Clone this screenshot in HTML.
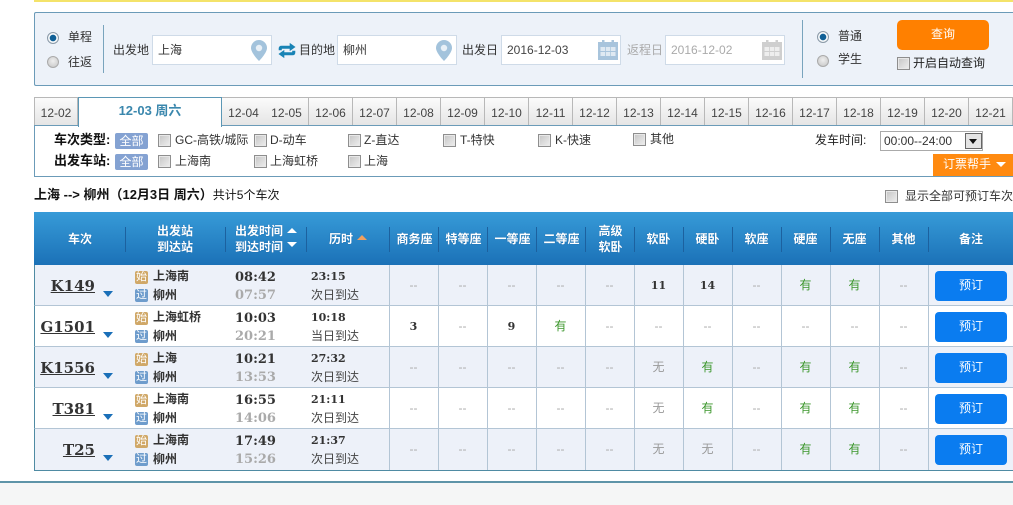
<!DOCTYPE html>
<html lang="zh"><head><meta charset="utf-8"><title>车票查询</title>
<style>
html,body{margin:0;padding:0;background:#fff}
#p{position:relative;width:1013px;height:505px;overflow:hidden;font:12px/16px "Liberation Sans","Noto Sans CJK SC",sans-serif;color:#333;background:#fff}
#p div,#p span,#p b,#p svg{position:absolute;white-space:nowrap}
.rd{width:12px;height:12px;border-radius:50%;border:1px solid #aaa;box-sizing:border-box;background:radial-gradient(circle at 50% 40%,#eee,#c4c4c4)}
.rd.on{border-color:#8a9aa8;background:radial-gradient(circle,#0f5f96 0 3px,#fff 3.6px,#d8dde2)}
.cb{width:13px;height:13px;box-sizing:border-box;border:1px solid #8e8e8e;background:linear-gradient(135deg,#c4c4c4,#efefef);box-shadow:inset 0 0 0 1px #e8e8e8}
.in{height:30px;box-sizing:border-box;width:120px;top:35px;background:#fff;border:1px solid #cfdbe8;line-height:28px;padding-left:5px}
.tab{top:97px;height:29px;width:44px;box-sizing:border-box;border:1px solid #b8b8b8;border-left:0;border-bottom:0;background:linear-gradient(#fbfbfb,#e4e4e4);text-align:center;line-height:30px;color:#444}
.bd{width:33px;height:16px;background:#84a2d2;color:#fff;text-align:center;border-radius:2px;line-height:16px}
.f{font-weight:bold;color:#111;font-size:13px}
.h{color:#fff;font-weight:bold;text-align:center;line-height:16px;text-shadow:0 0 1px #145c9a}
.sp{top:227px;height:25px;width:1px;background:#1c619f}
.row{left:0;width:1013px;height:41px}
.row:before{content:"";position:absolute;left:34px;right:0;top:0;bottom:0;border-left:1px solid #4f8ba3;border-bottom:1px solid #b3c5d5;background:#fff}
.row.o:before{background:#edf1f9}
.v{top:0;width:1px;height:41px;background:#b3c5d5}
.n{right:918px;top:11px;font:bold 15px/20px "DejaVu Serif",serif;color:#333;text-decoration:underline}
.ar{left:103px;top:26px;width:0;height:0;border:5px solid transparent;border-top:6px solid #1a6fb8;border-bottom:0}
.ic{left:135px;width:13px;height:13px;border-radius:2px;color:#fff;font-size:11px;line-height:13px;text-align:center}
.sh{background:#d0a868;top:6px}.gu{background:#6e9ccc;top:24px}
.s1,.s2{left:153px;font-weight:bold;color:#333}.s1{top:3px}.s2{top:22px}
.t1,.t2{left:235px;font:bold 13px/16px "DejaVu Serif",serif}.t1{top:5px;color:#333}.t2{top:23px;color:#aaa}
.d1{left:311px;top:4px;font:bold 11px/16px "DejaVu Serif",serif;color:#333}.d2{left:311px;top:22px;color:#444}
.c{top:0;width:49px;height:41px;line-height:41px;text-align:center;color:#aaa}
.g{color:#3b962b}.m{color:#999}.k{color:#333;font:bold 11px/41px "DejaVu Serif",serif}
.btn{left:935px;top:6px;width:72px;height:30px;border-radius:4px;background:#0a7cf0;color:#fff;text-align:center;line-height:29px}
</style></head><body><div id="p">

<div style="left:34px;right:0;top:0;height:2px;background:#f4e36a"></div>

<div style="left:34px;top:12px;width:979px;height:74px;box-sizing:border-box;background:#edf2f9;border:1px solid #6b9bb8;border-right:0;border-radius:2px 0 0 2px"></div>
<div class="rd on" style="left:47px;top:32px"></div><div style="left:68px;top:29px">单程</div>
<div class="rd" style="left:47px;top:56px"></div><div style="left:68px;top:54px">往返</div>
<div style="left:103px;top:25px;width:1px;height:48px;background:#79a4bd"></div>
<div style="left:113px;top:42px">出发地</div>
<div class="in" style="left:152px">上海</div>
<svg style="left:251px;top:40px" width="16" height="21" viewBox="0 0 16 21"><path d="M8 0a8 8 0 0 0-8 8c0 5 8 13 8 13s8-8 8-13a8 8 0 0 0-8-8z" fill="#a3c3dc"/><circle cx="8" cy="8" r="3.2" fill="#e8f0f7"/></svg>
<svg style="left:278px;top:42px" width="18" height="17" viewBox="0 0 18 17"><path d="M1 8V6.500C1 5 2 4 3.500 4H12V1.500L17 5l-5 3.500V6.500H3.500V8zM17 9v1.500c0 1.500-1 2.500-2.500 2.500H6v2.500L1 12l5-3.500v2h8.500V9z" fill="#1883b5" stroke="#1883b5" stroke-width=".6"/></svg>
<div style="left:299px;top:42px">目的地</div>
<div class="in" style="left:337px">柳州</div>
<svg style="left:436px;top:40px" width="16" height="21" viewBox="0 0 16 21"><path d="M8 0a8 8 0 0 0-8 8c0 5 8 13 8 13s8-8 8-13a8 8 0 0 0-8-8z" fill="#a3c3dc"/><circle cx="8" cy="8" r="3.2" fill="#e8f0f7"/></svg>
<div style="left:462px;top:42px">出发日</div>
<div class="in" style="left:501px;color:#444">2016-12-03</div>
<svg style="left:598px;top:40px" width="20" height="20" viewBox="0 0 20 20"><rect x="0" y="2" width="20" height="18" fill="#a8c4dc"/><rect x="4" y="0" width="2.500" height="5" fill="#a8c4dc"/><rect x="13.500" y="0" width="2.500" height="5" fill="#a8c4dc"/><rect x="2.500" y="7" width="4.500" height="4" fill="#dfe9f2"/><rect x="7.800" y="7" width="4.500" height="4" fill="#dfe9f2"/><rect x="13" y="7" width="4.500" height="4" fill="#dfe9f2"/><rect x="2.500" y="12" width="4.500" height="4" fill="#dfe9f2"/><rect x="7.800" y="12" width="4.500" height="4" fill="#dfe9f2"/><rect x="13" y="12" width="4.500" height="4" fill="#dfe9f2"/></svg>
<div style="left:627px;top:42px;color:#aaa">返程日</div>
<div class="in" style="left:665px;color:#aaa">2016-12-02</div>
<svg style="left:762px;top:40px" width="20" height="20" viewBox="0 0 20 20"><rect x="0" y="2" width="20" height="18" fill="#cfcfcf"/><rect x="4" y="0" width="2.500" height="5" fill="#cfcfcf"/><rect x="13.500" y="0" width="2.500" height="5" fill="#cfcfcf"/><rect x="2.500" y="7" width="4.500" height="4" fill="#eee"/><rect x="7.800" y="7" width="4.500" height="4" fill="#eee"/><rect x="13" y="7" width="4.500" height="4" fill="#eee"/><rect x="2.500" y="12" width="4.500" height="4" fill="#eee"/><rect x="7.800" y="12" width="4.500" height="4" fill="#eee"/><rect x="13" y="12" width="4.500" height="4" fill="#eee"/></svg>
<div style="left:802px;top:20px;width:1px;height:58px;background:#79a4bd"></div>
<div class="rd on" style="left:817px;top:31px"></div><div style="left:838px;top:28px">普通</div>
<div class="rd" style="left:817px;top:55px"></div><div style="left:838px;top:51px">学生</div>
<div style="left:897px;top:20px;width:92px;height:30px;background:#ff8000;border-radius:5px;color:#fff;text-align:center;line-height:28px">查询</div>
<div class="cb" style="left:897px;top:57px"></div><div style="left:913px;top:55px;color:#222">开启自动查询</div>

<div class="tab" style="left:34px;border-left:1px solid #b8b8b8">12-02</div>
<div style="left:78px;top:97px;width:144px;height:30px;box-sizing:border-box;background:#fff;border:1px solid #5b97b5;border-bottom:0;text-align:center;line-height:26px;color:#3a87ad;font-weight:bold;font-size:13px;z-index:2">12-03 周六</div>
<div class="tab" style="left:222px">12-04</div><div class="tab" style="left:265px">12-05</div><div class="tab" style="left:309px">12-06</div><div class="tab" style="left:353px">12-07</div><div class="tab" style="left:397px">12-08</div><div class="tab" style="left:441px">12-09</div><div class="tab" style="left:485px">12-10</div><div class="tab" style="left:529px">12-11</div><div class="tab" style="left:573px">12-12</div><div class="tab" style="left:617px">12-13</div><div class="tab" style="left:661px">12-14</div><div class="tab" style="left:705px">12-15</div><div class="tab" style="left:749px">12-16</div><div class="tab" style="left:793px">12-17</div><div class="tab" style="left:837px">12-18</div><div class="tab" style="left:881px">12-19</div><div class="tab" style="left:925px">12-20</div><div class="tab" style="left:969px">12-21</div>

<div style="left:34px;top:125px;width:979px;height:52px;box-sizing:border-box;border:1px solid #6b9bb8;border-right:0;background:#fff"></div>
<div class="f" style="left:54px;top:132px">车次类型:</div><div class="bd" style="left:115px;top:133px">全部</div>
<div class="cb" style="left:158px;top:134px"></div><div style="left:175px;top:132px">GC-高铁/城际</div>
<div class="cb" style="left:254px;top:134px"></div><div style="left:270px;top:132px">D-动车</div>
<div class="cb" style="left:348px;top:134px"></div><div style="left:364px;top:132px">Z-直达</div>
<div class="cb" style="left:443px;top:134px"></div><div style="left:460px;top:132px">T-特快</div>
<div class="cb" style="left:538px;top:134px"></div><div style="left:555px;top:132px">K-快速</div>
<div class="cb" style="left:633px;top:133px"></div><div style="left:650px;top:131px">其他</div>
<div style="left:815px;top:132px;color:#222">发车时间:</div>
<div style="left:880px;top:131px;width:103px;height:20px;box-sizing:border-box;border:1px solid #aaa;background:#fff;line-height:19px;padding-left:3px">00:00--24:00</div>
<div style="left:965px;top:133px;width:17px;height:16px;box-sizing:border-box;border:1px solid #666;background:#e4e4e4"></div>
<div style="left:969px;top:139px;width:0;height:0;border:4px solid transparent;border-top:5px solid #111;border-bottom:0"></div>
<div class="f" style="left:54px;top:153px">出发车站:</div><div class="bd" style="left:115px;top:154px">全部</div>
<div class="cb" style="left:158px;top:155px"></div><div style="left:175px;top:153px">上海南</div>
<div class="cb" style="left:254px;top:155px"></div><div style="left:270px;top:153px">上海虹桥</div>
<div class="cb" style="left:348px;top:155px"></div><div style="left:364px;top:153px">上海</div>
<div style="left:933px;top:154px;width:80px;height:22px;background:#ff8a10;color:#fff;line-height:21px;padding-left:10px;box-sizing:border-box">订票帮手</div>
<div style="left:996px;top:162px;width:0;height:0;border:5px solid transparent;border-top:5px solid #fff;border-bottom:0"></div>

<div style="left:34px;top:187px;color:#111"><b style="position:static;font-size:13px">上海 --&gt; 柳州（12月3日 周六）</b>共计5个车次</div>
<div class="cb" style="left:885px;top:190px"></div><div style="left:905px;top:188px">显示全部可预订车次</div>

<div style="left:34px;top:212px;width:979px;height:53px;background:linear-gradient(#379bd8,#1b71b7)"></div>
<div class="h" style="left:60px;width:40px;top:231px">车次</div>
<div class="h" style="left:145px;width:60px;top:223px">出发站<br>到达站</div>
<div class="h" style="left:235px;top:223px">出发时间<br>到达时间</div>
<div style="left:287px;top:228px;width:0;height:0;border:5px solid transparent;border-bottom:5px solid #fff;border-top:0"></div>
<div style="left:287px;top:242px;width:0;height:0;border:5px solid transparent;border-top:5px solid #fff;border-bottom:0"></div>
<div class="h" style="left:329px;top:231px">历时</div>
<div style="left:357px;top:235px;width:0;height:0;border:5px solid transparent;border-bottom:5px solid #f0a060;border-top:0"></div>
<div class="sp" style="left:125px"></div><div class="sp" style="left:225px"></div><div class="sp" style="left:306px"></div><div class="sp" style="left:389px"></div><div class="sp" style="left:438px"></div><div class="sp" style="left:487px"></div><div class="sp" style="left:536px"></div><div class="sp" style="left:585px"></div><div class="sp" style="left:634px"></div><div class="sp" style="left:683px"></div><div class="sp" style="left:732px"></div><div class="sp" style="left:781px"></div><div class="sp" style="left:830px"></div><div class="sp" style="left:879px"></div><div class="sp" style="left:928px"></div>
<div class="h" style="left:390px;width:49px;top:231px">商务座</div><div class="h" style="left:439px;width:49px;top:231px">特等座</div><div class="h" style="left:488px;width:49px;top:231px">一等座</div><div class="h" style="left:537px;width:49px;top:231px">二等座</div>
<div class="h" style="left:586px;width:49px;top:223px">高级<br>软卧</div>
<div class="h" style="left:634px;width:49px;top:231px">软卧</div><div class="h" style="left:683px;width:49px;top:231px">硬卧</div><div class="h" style="left:732px;width:49px;top:231px">软座</div><div class="h" style="left:781px;width:49px;top:231px">硬座</div><div class="h" style="left:830px;width:49px;top:231px">无座</div><div class="h" style="left:879px;width:49px;top:231px">其他</div><div class="h" style="left:931px;width:80px;top:231px">备注</div>

<div class="row o" style="top:265px">
<div class="v" style="left:389px"></div><div class="v" style="left:438px"></div><div class="v" style="left:487px"></div><div class="v" style="left:536px"></div><div class="v" style="left:585px"></div><div class="v" style="left:634px"></div><div class="v" style="left:683px"></div><div class="v" style="left:732px"></div><div class="v" style="left:781px"></div><div class="v" style="left:830px"></div><div class="v" style="left:879px"></div><div class="v" style="left:928px"></div>
<div class="n">K149</div><div class="ar"></div><div class="ic sh">始</div><div class="ic gu">过</div><div class="s1">上海南</div><div class="s2">柳州</div><div class="t1">08:42</div><div class="t2">07:57</div><div class="d1">23:15</div><div class="d2">次日到达</div>
<div class="c" style="left:389px">--</div><div class="c" style="left:438px">--</div><div class="c" style="left:487px">--</div><div class="c" style="left:536px">--</div><div class="c" style="left:585px">--</div><div class="c k" style="left:634px">11</div><div class="c k" style="left:683px">14</div><div class="c" style="left:732px">--</div><div class="c g" style="left:781px">有</div><div class="c g" style="left:830px">有</div><div class="c" style="left:879px">--</div>
<div class="btn">预订</div></div>

<div class="row" style="top:306px">
<div class="v" style="left:389px"></div><div class="v" style="left:438px"></div><div class="v" style="left:487px"></div><div class="v" style="left:536px"></div><div class="v" style="left:585px"></div><div class="v" style="left:634px"></div><div class="v" style="left:683px"></div><div class="v" style="left:732px"></div><div class="v" style="left:781px"></div><div class="v" style="left:830px"></div><div class="v" style="left:879px"></div><div class="v" style="left:928px"></div>
<div class="n">G1501</div><div class="ar"></div><div class="ic sh">始</div><div class="ic gu">过</div><div class="s1">上海虹桥</div><div class="s2">柳州</div><div class="t1">10:03</div><div class="t2">20:21</div><div class="d1">10:18</div><div class="d2">当日到达</div>
<div class="c k" style="left:389px">3</div><div class="c" style="left:438px">--</div><div class="c k" style="left:487px">9</div><div class="c g" style="left:536px">有</div><div class="c" style="left:585px">--</div><div class="c" style="left:634px">--</div><div class="c" style="left:683px">--</div><div class="c" style="left:732px">--</div><div class="c" style="left:781px">--</div><div class="c" style="left:830px">--</div><div class="c" style="left:879px">--</div>
<div class="btn">预订</div></div>

<div class="row o" style="top:347px">
<div class="v" style="left:389px"></div><div class="v" style="left:438px"></div><div class="v" style="left:487px"></div><div class="v" style="left:536px"></div><div class="v" style="left:585px"></div><div class="v" style="left:634px"></div><div class="v" style="left:683px"></div><div class="v" style="left:732px"></div><div class="v" style="left:781px"></div><div class="v" style="left:830px"></div><div class="v" style="left:879px"></div><div class="v" style="left:928px"></div>
<div class="n">K1556</div><div class="ar"></div><div class="ic sh">始</div><div class="ic gu">过</div><div class="s1">上海</div><div class="s2">柳州</div><div class="t1">10:21</div><div class="t2">13:53</div><div class="d1">27:32</div><div class="d2">次日到达</div>
<div class="c" style="left:389px">--</div><div class="c" style="left:438px">--</div><div class="c" style="left:487px">--</div><div class="c" style="left:536px">--</div><div class="c" style="left:585px">--</div><div class="c m" style="left:634px">无</div><div class="c g" style="left:683px">有</div><div class="c" style="left:732px">--</div><div class="c g" style="left:781px">有</div><div class="c g" style="left:830px">有</div><div class="c" style="left:879px">--</div>
<div class="btn">预订</div></div>

<div class="row" style="top:388px">
<div class="v" style="left:389px"></div><div class="v" style="left:438px"></div><div class="v" style="left:487px"></div><div class="v" style="left:536px"></div><div class="v" style="left:585px"></div><div class="v" style="left:634px"></div><div class="v" style="left:683px"></div><div class="v" style="left:732px"></div><div class="v" style="left:781px"></div><div class="v" style="left:830px"></div><div class="v" style="left:879px"></div><div class="v" style="left:928px"></div>
<div class="n">T381</div><div class="ar"></div><div class="ic sh">始</div><div class="ic gu">过</div><div class="s1">上海南</div><div class="s2">柳州</div><div class="t1">16:55</div><div class="t2">14:06</div><div class="d1">21:11</div><div class="d2">次日到达</div>
<div class="c" style="left:389px">--</div><div class="c" style="left:438px">--</div><div class="c" style="left:487px">--</div><div class="c" style="left:536px">--</div><div class="c" style="left:585px">--</div><div class="c m" style="left:634px">无</div><div class="c g" style="left:683px">有</div><div class="c" style="left:732px">--</div><div class="c g" style="left:781px">有</div><div class="c g" style="left:830px">有</div><div class="c" style="left:879px">--</div>
<div class="btn">预订</div></div>

<div class="row o" style="top:429px;height:42px">
<div class="v" style="left:389px"></div><div class="v" style="left:438px"></div><div class="v" style="left:487px"></div><div class="v" style="left:536px"></div><div class="v" style="left:585px"></div><div class="v" style="left:634px"></div><div class="v" style="left:683px"></div><div class="v" style="left:732px"></div><div class="v" style="left:781px"></div><div class="v" style="left:830px"></div><div class="v" style="left:879px"></div><div class="v" style="left:928px"></div>
<div class="n">T25</div><div class="ar"></div><div class="ic sh">始</div><div class="ic gu">过</div><div class="s1">上海南</div><div class="s2">柳州</div><div class="t1">17:49</div><div class="t2">15:26</div><div class="d1">21:37</div><div class="d2">次日到达</div>
<div class="c" style="left:389px">--</div><div class="c" style="left:438px">--</div><div class="c" style="left:487px">--</div><div class="c" style="left:536px">--</div><div class="c" style="left:585px">--</div><div class="c m" style="left:634px">无</div><div class="c m" style="left:683px">无</div><div class="c" style="left:732px">--</div><div class="c g" style="left:781px">有</div><div class="c g" style="left:830px">有</div><div class="c" style="left:879px">--</div>
<div class="btn">预订</div></div>
<div style="left:34px;top:470px;width:979px;height:1px;background:#4f8ba3"></div>

<div style="left:0;top:481px;width:1013px;height:2px;background:#5e94a8"></div>
<div style="left:0;top:483px;width:1013px;height:22px;background:#f5f6f6"></div>
</div></body></html>
